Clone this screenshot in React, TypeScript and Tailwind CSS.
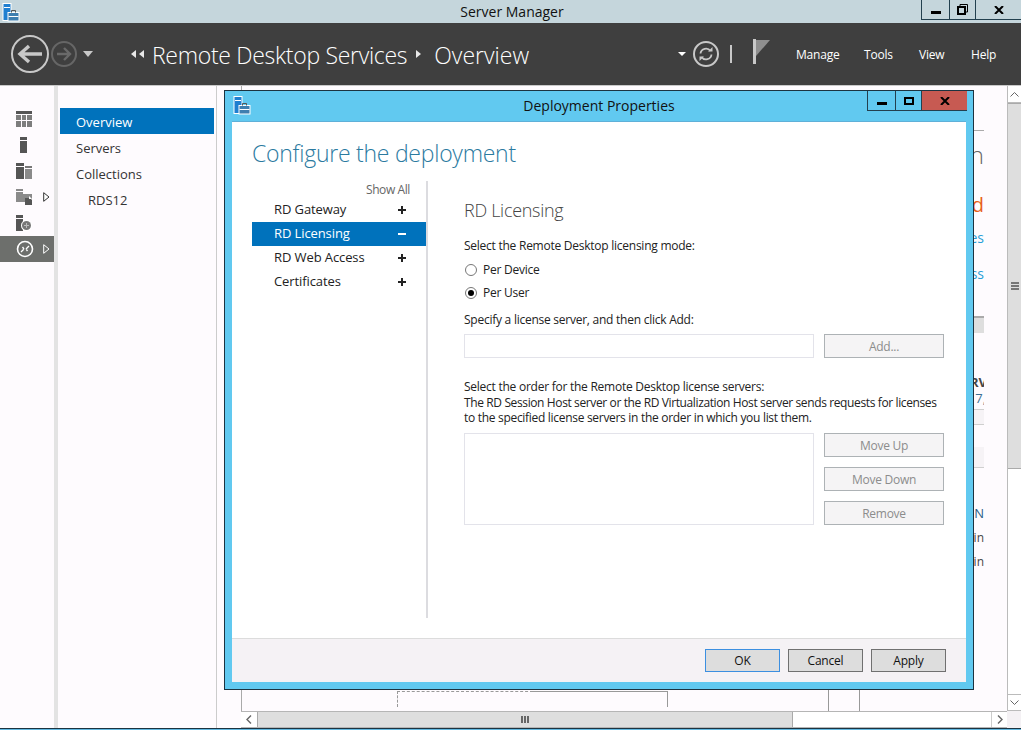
import type { ReactNode } from 'react'

const ServerManagerIcon = () => (
  <svg width="18" height="20" viewBox="0 0 18 20">
    <rect x="1" y="0.5" width="8" height="17" fill="#1f7fd0" stroke="#fff" />
    <rect x="2" y="4" width="6" height="1" fill="#fff" />
    <rect x="5.5" y="9" width="12" height="9.5" fill="#fff" />
    <rect x="6.5" y="10" width="10" height="7.5" fill="#3f7fb0" />
    <rect x="6.5" y="13" width="10" height="1" fill="#fff" />
    <path d="M9.5 9.5V7.5h4v2" fill="none" stroke="#555" />
  </svg>
)

const RailIcon = ({ children }: { children: ReactNode }) => (
  <svg width="16" height="16" viewBox="0 0 16 16">
    {children}
  </svg>
)

const railItems: { icon: ReactNode; arrow?: boolean; active?: boolean }[] = [
  {
    icon: (
      <RailIcon>
        <rect x="0" y="0" width="16" height="3" fill="#555" />
        <path d="M0 4h5v5H0zM6 4h4v5H6zM11 4h5v5h-5zM0 10h5v6H0zM6 10h4v6H6zM11 10h5v6h-5z" fill="#7d7d7d" />
      </RailIcon>
    ),
  },
  {
    icon: (
      <RailIcon>
        <rect x="4" y="0" width="7" height="3" fill="#555" />
        <rect x="4" y="4" width="7" height="12" fill="#555" />
      </RailIcon>
    ),
  },
  {
    icon: (
      <RailIcon>
        <rect x="0" y="0" width="8" height="3" fill="#555" />
        <rect x="0" y="4" width="8" height="12" fill="#555" />
        <rect x="9" y="3" width="7" height="2" fill="#777" />
        <rect x="9" y="6" width="7" height="10" fill="#8a8a8a" />
      </RailIcon>
    ),
  },
  {
    arrow: true,
    icon: (
      <RailIcon>
        <path d="M0 0h7v2H0zM0 3h7v2h9v5H9v3H0z" fill="#8a8a8a" />
        <path d="M9 9h5l2 2v5H9z" fill="#555" />
        <path d="M13 7l3 3h-3z" fill="#fff" />
      </RailIcon>
    ),
  },
  {
    icon: (
      <RailIcon>
        <rect x="0" y="0" width="7" height="3" fill="#555" />
        <rect x="0" y="4" width="7" height="12" fill="#555" />
        <circle cx="10.5" cy="10.5" r="5.5" fill="#fff" />
        <circle cx="10.5" cy="10.5" r="4.5" fill="#777" />
        <path d="M8 10.5h5M10.5 8v5" stroke="#bbb" />
      </RailIcon>
    ),
  },
  {
    active: true,
    arrow: true,
    icon: (
      <svg width="18" height="18" viewBox="0 0 18 18">
        <circle cx="9" cy="9" r="7.5" fill="none" stroke="#fff" strokeWidth="1.6" />
        <path d="M5 12l3-3M13 6l-3 3M6.500 7l1.500 2M11.500 11l-1.500-2" stroke="#fff" strokeWidth="1.3" fill="none" />
      </svg>
    ),
  },
]

const navItems = ['Overview', 'Servers', 'Collections']
const sections = ['RD Gateway', 'RD Licensing', 'RD Web Access', 'Certificates']

const SideButton = ({ label }: { label: string }) => (
  <div className="flex h-[24px] w-[120px] items-center justify-center border border-[#adb2b5] bg-[#f5f4f5] pt-[2px] text-[12px] text-[#8c8c8c]">
    {label}
  </div>
)

const Radio = ({ label, checked }: { label: string; checked?: boolean }) => (
  <div className="flex h-[23px] items-center gap-[6px] pl-[1px]">
    <span className="flex h-[12px] w-[12px] items-center justify-center rounded-full border border-[#777] bg-white">
      {checked && <span className="h-[6px] w-[6px] rounded-full bg-black" />}
    </span>
    <span>{label}</span>
  </div>
)

const FooterButton = ({ label, focused }: { label: string; focused?: boolean }) => (
  <div
    className={`flex h-[23px] w-[75px] items-center justify-center border bg-[#dddddd] text-[12px] tracking-[-0.2px] text-[#111] ${
      focused ? 'border-[#3c8fe0]' : 'border-[#707070]'
    }`}
  >
    {label}
  </div>
)

const WindowButton = ({ className, children }: { className: string; children: ReactNode }) => (
  <div className={`flex items-center justify-center border-b border-l border-[#23404f] ${className}`}>
    {children}
  </div>
)

const CloseGlyph = () => (
  <svg width="10" height="8" viewBox="0 0 10 8">
    <path d="M1 0l8 8M9 0L1 8" stroke="#000" strokeWidth="2" fill="none" />
  </svg>
)

const DeploymentDialog = () => (
  <div className="absolute top-[90px] left-[224px] flex h-[600px] w-[750px] flex-col border border-[#1c3340] bg-[#61c9f0]">
    <div className="relative flex h-[30px] shrink-0 items-center justify-center pb-[2px] text-[14px] text-[#111]">
      <div className="absolute top-[5px] left-[8px]">
        <ServerManagerIcon />
      </div>
      <span>Deployment Properties</span>
      <div className="absolute top-0 right-[6px] flex h-[20px]">
        <WindowButton className="w-[28px]">
          <span className="mt-[6px] h-[3px] w-[10px] bg-black" />
        </WindowButton>
        <WindowButton className="w-[26px]">
          <span className="h-[8px] w-[10px] border-2 border-black" />
        </WindowButton>
        <WindowButton className="w-[46px] bg-[#c75a52]">
          <CloseGlyph />
        </WindowButton>
      </div>
    </div>
    <div className="mx-[7px] mb-[7px] flex min-h-0 flex-1 flex-col border-t border-[#5fb0d8] bg-white">
      <div className="flex-1 pl-[20px]">
        <h1 className="h-[59px] pt-[13px] text-[23px] leading-[36px] font-light tracking-[-0.25px] text-[#2b7a9f]">
          Configure the deployment
        </h1>
        <div className="flex h-[437px] text-[#222]">
          <div className="flex w-[176px] flex-col border-r-2 border-[#dcdce0]">
            <div className="h-[17px] pr-[16px] text-right text-[12px] leading-[17px] tracking-[-0.4px] text-[#666]">
              Show All
            </div>
            {sections.map((section) => {
              const open = section === 'RD Licensing'
              return (
                <div
                  key={section}
                  className={`flex h-[24px] items-center justify-between pr-[20px] pl-[22px] text-[13px] tracking-[-0.1px] ${
                    open ? 'bg-[#0072bc] text-white' : ''
                  }`}
                >
                  <span>{section}</span>
                  <span className={`relative h-[2px] w-[8px] ${open ? 'bg-white' : 'bg-[#222]'}`}>
                    {!open && <span className="absolute top-[-3px] left-[3px] h-[8px] w-[2px] bg-[#222]" />}
                  </span>
                </div>
              )
            })}
          </div>
          <div className="w-[516px] pl-[36px] text-[12px] tracking-[-0.25px]">
            <h2 className="mt-[16px] h-[26px] text-[18px] leading-[26px] font-light tracking-[-0.3px] text-[#444]">
              RD Licensing
            </h2>
            <p className="mt-[14px] h-[18px] leading-[18px]">Select the Remote Desktop licensing mode:</p>
            <div className="mt-[3px]">
              <Radio label="Per Device" />
              <Radio label="Per User" checked />
            </div>
            <p className="mt-[7px] h-[18px] leading-[18px]">Specify a license server, and then click Add:</p>
            <div className="mt-[5px] flex gap-[10px]">
              <div className="h-[24px] w-[350px] border border-[#e3e3ea]" />
              <SideButton label="Add..." />
            </div>
            <div className="mt-[21px] h-[47px] leading-[15.5px] whitespace-nowrap">
              <p>Select the order for the Remote Desktop license servers:</p>
              <p className="tracking-[-0.38px]">
                The RD Session Host server or the RD Virtualization Host server sends requests for licenses
              </p>
              <p className="tracking-[-0.3px]">
                to the specified license servers in the order in which you list them.
              </p>
            </div>
            <div className="mt-[7px] flex gap-[10px]">
              <div className="h-[92px] w-[350px] border border-[#e3e3ea]" />
              <div className="flex flex-col gap-[10px]">
                <SideButton label="Move Up" />
                <SideButton label="Move Down" />
                <SideButton label="Remove" />
              </div>
            </div>
          </div>
        </div>
      </div>
      <div className="flex h-[44px] shrink-0 justify-end gap-[8px] border-t border-[#dcdcdc] bg-[#f5f2f5] pt-[10px] pr-[20px]">
        <FooterButton label="OK" focused />
        <FooterButton label="Cancel" />
        <FooterButton label="Apply" />
      </div>
    </div>
  </div>
)

// what still shows of the dashboard to the right of the dialog
const PeekColumn = () => (
  <div className="flex w-[10px] flex-col items-end overflow-hidden whitespace-nowrap">
    <div className="mt-[44px] h-[1px] w-full shrink-0 bg-[#aaa]" />
    <div className="h-[50px] shrink-0 text-[24px] leading-[48px] font-light text-[#666]">n</div>
    <div className="h-[50px] shrink-0 text-[20px] leading-[48px] text-[#e8601a]">d</div>
    <div className="h-[16px] shrink-0 text-[14px] leading-[14px] text-[#2a9fd8]">es</div>
    <div className="mt-[20px] h-[16px] shrink-0 text-[14px] leading-[14px] text-[#2a9fd8]">ss</div>
    <div className="mt-[33px] h-[17px] w-full shrink-0 border-t-2 border-[#aaa] bg-[#dedede]" />
    <div className="mt-[41px] mr-[-3px] h-[16px] shrink-0 text-[13px] leading-[16px] font-bold text-[#444]">RV</div>
    <div className="mr-[-2px] h-[16px] shrink-0 text-[13px] leading-[16px] text-[#3b6f94]">17,</div>
    <div className="mt-[3px] h-[16px] w-full shrink-0 border-y border-[#cfcfcf] bg-[#f6f3f6]" />
    <div className="mt-[22px] h-[21px] w-full shrink-0 border-b border-[#cfcfcf] bg-[#f6f3f6]" />
    <div className="mt-[37px] h-[16px] shrink-0 text-[13px] leading-[16px] text-[#2b5f86]">N</div>
    <div className="mt-[9px] h-[16px] shrink-0 text-[12px] leading-[16px] text-[#444]">in</div>
    <div className="mt-[8px] h-[16px] shrink-0 text-[12px] leading-[16px] text-[#444]">ain</div>
  </div>
)

export default function App() {
  return (
    <div className="relative flex h-[730px] w-[1021px] flex-col overflow-hidden bg-[#fefbfe] font-['Open_Sans',sans-serif]">
      <div className="relative flex h-[23px] shrink-0 items-center justify-center bg-[#c5d6dc] pl-[3px] text-[14px] text-[#111]">
        <div className="absolute top-[3px] left-[2px]">
          <ServerManagerIcon />
        </div>
        <span>Server Manager</span>
        <div className="absolute top-0 right-0 flex h-[20px]">
          <WindowButton className="w-[28px]">
            <span className="mt-[6px] h-[3px] w-[10px] bg-black" />
          </WindowButton>
          <WindowButton className="w-[26px]">
            <svg width="11" height="11" viewBox="0 0 11 11">
              <path d="M3 2V0.5h7.5V8H9" fill="none" stroke="#000" />
              <rect x="1" y="3" width="7" height="7" fill="none" stroke="#000" strokeWidth="2" />
            </svg>
          </WindowButton>
          <WindowButton className="w-[46px]">
            <CloseGlyph />
          </WindowButton>
        </div>
      </div>

      <div className="flex h-[63px] shrink-0 items-center border-b border-[#c9c9c9] bg-[#3f3f3f] pb-[1px] text-white">
        <div className="ml-[11px] flex h-[38px] w-[38px] items-center justify-center rounded-full border-2 border-[#c8c8c8]">
          <svg width="26" height="20" viewBox="0 0 26 20">
            <path d="M12 2L3 10l9 8M3 10h22" fill="none" stroke="#c8c8c8" strokeWidth="3.4" />
          </svg>
        </div>
        <div className="ml-[2px] flex h-[26px] w-[26px] items-center justify-center rounded-full border-2 border-[#666]">
          <svg width="16" height="14" viewBox="0 0 16 14">
            <path d="M8 1l6 6-6 6M14 7H1" fill="none" stroke="#6a6a6a" strokeWidth="2.4" />
          </svg>
        </div>
        <span className="ml-[6px] h-0 w-0 border-x-[5px] border-t-[6px] border-x-transparent border-t-[#c8c8c8]" />
        <svg className="ml-[38px]" width="14" height="8" viewBox="0 0 14 8">
          <path d="M5 0v8L0 4zM13 0v8L8 4z" fill="#e8e8e8" />
        </svg>
        <span className="ml-[7px] pt-[3px] text-[23px] leading-none font-light tracking-[-0.3px]">
          Remote Desktop Services
        </span>
        <svg className="ml-[9px]" width="6" height="8" viewBox="0 0 6 8">
          <path d="M0 0v8l5-4z" fill="#e8e8e8" />
        </svg>
        <span className="ml-[12px] pt-[3px] text-[23px] leading-none font-light">Overview</span>
        <span className="ml-auto h-0 w-0 border-x-[4px] border-t-[4px] border-x-transparent border-t-white" />
        <div className="ml-[7px] flex h-[26px] w-[26px] items-center justify-center rounded-full border-2 border-[#c8c8c8]">
          <svg width="16" height="14" viewBox="0 0 16 14">
            <path d="M2.500 6.500A5.500 5.500 0 0 1 12.500 4M13.500 7.500A5.500 5.500 0 0 1 3.500 10" fill="none" stroke="#c8c8c8" strokeWidth="1.8" />
            <path d="M10 4.500h4.500V0zM6 9.500H1.500V14z" fill="#c8c8c8" />
          </svg>
        </div>
        <span className="ml-[11px] h-[18px] w-[2px] bg-[#c8c8c8]" />
        <svg className="mt-[-5px] ml-[21px]" width="18" height="25" viewBox="0 0 18 25">
          <path d="M0 0h3v25H0z" fill="#c8c8c8" />
          <path d="M3 1h14l-14 16z" fill="#8f8f8f" />
        </svg>
        <div className="ml-[25px] flex w-[225px] pt-[2px] text-[12px] tracking-[-0.2px]">
          <span className="w-[68px]">Manage</span>
          <span className="w-[55px]">Tools</span>
          <span className="w-[52px]">View</span>
          <span>Help</span>
        </div>
      </div>

      <div className="flex min-h-0 flex-1">
        <div className="w-[54px] shrink-0 pt-[20px]">
          {railItems.map((item, i) => (
            <div
              key={i}
              className={`relative flex h-[26px] items-center pl-[16px] ${item.active ? 'bg-[#6d6f6c]' : ''}`}
            >
              {item.icon}
              {item.arrow && (
                <svg className="absolute left-[43px]" width="7" height="10" viewBox="0 0 7 10">
                  <path d="M0.700 0.700v8.600L6 5z" fill={item.active ? 'none' : '#fff'} stroke={item.active ? '#fff' : '#333'} />
                </svg>
              )}
            </div>
          ))}
        </div>
        <div className="w-[4px] shrink-0 bg-[#e3e3e3]" />
        <div className="w-[159px] shrink-0 border-r border-[#cccccc] pt-[22px] pl-[2px] text-[13px] text-[#333]">
          {navItems.map((item) => (
            <div
              key={item}
              className={`flex h-[26px] w-[154px] items-center pt-[4px] pl-[16px] ${
                item === 'Overview' ? 'bg-[#0072bc] text-white' : ''
              }`}
            >
              {item}
            </div>
          ))}
          <div className="flex h-[26px] items-center pt-[4px] pl-[28px]">RDS12</div>
        </div>

        <div className="flex min-w-0 flex-1 flex-col">
          <div className="flex min-h-0 flex-1">
            <div className="relative ml-[24px] flex flex-1 justify-end border-l border-[#aaa] pr-[23px]">
              <PeekColumn />
              {/* tree connector under the dialog */}
              <div className="absolute top-[605px] left-[155px] h-[16px] w-[136px] border-t border-l border-dashed border-[#999]" />
              <div className="absolute top-[605px] left-[291px] h-[16px] w-[135px] border-t border-r border-[#999]" />
              <div className="absolute top-[604px] left-[586px] h-[21px] w-[32px] border-x border-[#999]" />
            </div>
            <div className="flex w-[14px] shrink-0 flex-col border-l border-[#bbb]">
              <div className="flex h-[17px] items-center justify-center border-b border-[#bbb] bg-white">
                <svg width="9" height="5" viewBox="0 0 9 5">
                  <path d="M0.500 4.500l4-4 4 4" fill="none" stroke="#666" />
                </svg>
              </div>
              <div className="flex h-[366px] flex-col items-center justify-center gap-[1px] border-y border-[#aaa] bg-[#dedede]">
                <span className="h-[2px] w-[8px] bg-[#777]" />
                <span className="h-[2px] w-[8px] bg-[#777]" />
                <span className="h-[2px] w-[8px] bg-[#777]" />
              </div>
              <div className="flex-1 bg-white" />
              <div className="flex h-[17px] items-center justify-center border-y border-[#bbb] bg-white">
                <svg width="9" height="5" viewBox="0 0 9 5">
                  <path d="M0.500 0.500l4 4 4-4" fill="none" stroke="#666" />
                </svg>
              </div>
            </div>
          </div>
          <div className="flex h-[17px] shrink-0 pl-[24px]">
            <div className="flex flex-1 border-y border-[#b5b5b5] bg-white">
              <div className="flex w-[16px] items-center justify-center">
                <svg width="6" height="9" viewBox="0 0 6 9">
                  <path d="M5 0.500l-4 4 4 4" fill="none" stroke="#666" strokeWidth="1.4" />
                </svg>
              </div>
              <div className="flex w-[536px] items-center justify-center border-x border-[#aaa] bg-[#dedede]">
                <span className="flex gap-[1px]">
                  <span className="h-[7px] w-[2px] bg-[#666]" />
                  <span className="h-[7px] w-[2px] bg-[#666]" />
                  <span className="h-[7px] w-[2px] bg-[#666]" />
                </span>
              </div>
              <div className="flex-1" />
              <div className="flex w-[16px] items-center justify-center border-l border-[#ccc]">
                <svg width="6" height="9" viewBox="0 0 6 9">
                  <path d="M1 0.500l4 4-4 4" fill="none" stroke="#666" strokeWidth="1.4" />
                </svg>
              </div>
            </div>
            <div className="w-[14px] bg-[#f4f1f4]" />
          </div>
        </div>
      </div>

      <div className="flex h-[2px] shrink-0 border-t border-[#1c3340] bg-[#61b8e0]" />

      <DeploymentDialog />
    </div>
  )
}
